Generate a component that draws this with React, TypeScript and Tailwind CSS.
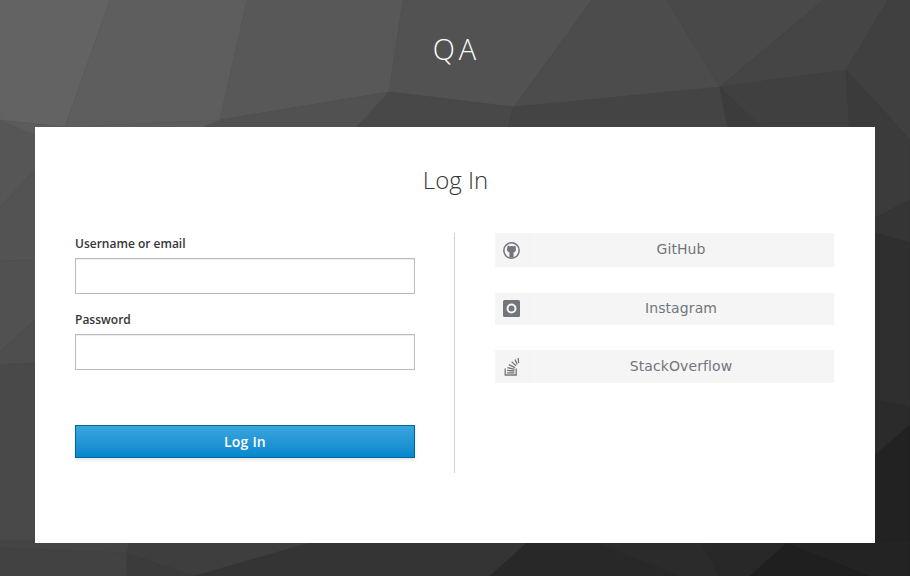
const polys: [string, string][] = [
  ["0,0 110,0 65,127 0,120", "#636363"],
  ["110,0 247,0 220,120 65,127", "#5e5e5e"],
  ["247,0 403,0 389,92 220,120", "#585858"],
  ["403,0 592,0 514,107 389,92", "#525252"],
  ["592,0 667,0 720,87 514,107", "#4c4c4c"],
  ["667,0 824,0 720,87", "#494949"],
  ["824,0 888,0 846,70 720,87", "#454545"],
  ["888,0 910,0 910,140 846,70", "#404040"],
  ["0,120 65,127 220,120 175,140 0,140", "#5c5c5c"],
  ["220,120 389,92 345,140 175,140", "#515151"],
  ["389,92 514,107 505,140 345,140", "#484848"],
  ["514,107 720,87 730,140 505,140", "#444444"],
  ["720,87 846,70 850,140 730,140", "#404040"],
  ["720,87 730,140 775,140", "#3c3c3c"],
  ["846,70 910,140 910,200 875,218 850,140", "#3b3b3b"],
  ["875,218 910,200 910,243 875,233", "#353535"],
  ["875,233 910,243 910,407 875,400", "#2f2f2f"],
  ["875,400 910,407 910,425 875,455", "#2b2b2b"],
  ["875,455 910,425 910,576 875,576", "#222222"],
  ["0,120 35,135 35,170 0,207", "#565656"],
  ["0,207 35,170 35,260 0,261", "#535353"],
  ["0,261 35,260 35,320 0,352", "#515151"],
  ["0,352 35,320 35,363 0,365", "#4e4e4e"],
  ["0,365 35,363 35,548 0,548", "#494949"],
  ["0,540 130,540 127,553 0,548", "#444444"],
  ["0,548 127,553 127,576 0,576", "#424242"],
  ["127,553 195,576 127,576", "#3b3b3b"],
  ["130,540 320,540 195,576 127,553", "#3e3e3e"],
  ["320,540 530,540 490,576 195,576", "#343434"],
  ["530,540 590,540 680,576 490,576", "#282828"],
  ["590,540 700,540 720,576 680,576", "#2b2b2b"],
  ["700,540 787,543 750,576 720,576", "#282828"],
  ["787,543 870,576 750,576", "#1f1f1f"],
  ["787,543 910,540 910,576 870,576", "#232323"],
];

function GithubIcon() {
  return (
    <svg width="17" height="17" viewBox="0 0 17 17" aria-hidden="true">
      <circle cx="8.5" cy="8.5" r="7.7" fill="none" stroke="#72767b" strokeWidth="1.5" />
      <path
        d="M4.6 3.4 L6.2 4.3 Q8.5 3.8 10.8 4.3 L12.4 3.4 L12.7 5.6 Q13.6 8.9 11.6 10 Q10.9 10.5 10.3 10.6 L10.6 11.4 V15.6 H6.4 V11.4 L6.7 10.6 Q6.1 10.5 5.4 10 Q3.4 8.9 4.3 5.6 Z"
        fill="#72767b"
      />
    </svg>
  );
}

function InstagramIcon() {
  return (
    <svg className="-translate-y-px" width="17" height="17" viewBox="0 0 17 17" aria-hidden="true">
      <rect width="17" height="17" rx="1.5" fill="#72767b" />
      <circle cx="8.5" cy="8.5" r="4" fill="none" stroke="#f5f5f5" strokeWidth="2" />
    </svg>
  );
}

function StackIcon() {
  return (
    <svg width="17" height="19" viewBox="0 0 17 19" aria-hidden="true">
      <g fill="none" stroke="#72767b" strokeWidth="1.3">
        <path d="M2.2 11.5 V18 H13.2 V11.5" />
        <path d="M4 15.9 H11.4" />
        <path d="M4 13.4 L11.4 14" />
        <path d="M4.4 10.6 L11.6 12.3" />
        <path d="M5.8 7.6 L12 10.6" />
        <path d="M8.6 4.6 L12.9 8.8" />
        <path d="M12 2.4 L14.2 7.6" />
        <path d="M15.2 1 L15.6 6" />
      </g>
    </svg>
  );
}

function Social({
  name,
  icon,
  className,
  textClass,
}: {
  name: string;
  icon: React.ReactNode;
  className: string;
  textClass: string;
}) {
  return (
    <a className={`flex items-stretch bg-[#f5f5f5] text-[#72767b] ${className}`}>
      <span className="flex w-[35px] shrink-0 items-center pl-2 border-r border-[#f2f2f2]">{icon}</span>
      <span
        className={`flex-1 self-center pr-[2px] text-center text-[14px] tracking-[0.1px] [font-family:'DejaVu_Sans',sans-serif] ${textClass}`}
      >
        {name}
      </span>
    </a>
  );
}

export default function App() {
  return (
    <div className="relative flex h-screen flex-col overflow-hidden bg-[#3a3a3a] [font-family:'Open_Sans',sans-serif]">
      <svg className="absolute inset-0" width="910" height="576" viewBox="0 0 910 576" aria-hidden="true">
        {polys.map(([p, c], i) => (
          <polygon key={i} points={p} fill={c} stroke={c} strokeWidth="0.5" />
        ))}
      </svg>
      <div className="relative flex h-[127px] shrink-0 justify-center pt-[28px]">
        <h1 className="pl-[3px] text-[29px] font-light leading-[42px] tracking-[4px] text-[#fafafa]">QA</h1>
      </div>
      <main className="relative mx-[35px] h-[416px] bg-white px-10 pt-[35px]">
        <h2 className="pl-[1px] text-center text-[24px] font-light leading-[36px] text-[#363636]">Log In</h2>
        <div className="mt-[35px] flex">
          <form className="w-[340px]">
            <label className="block pt-[2px] text-[12px] font-[550] leading-[17px] text-[#363636]">Username or email</label>
            <input className="mt-[6px] block h-[36px] w-full border border-[#bbbbbb] bg-white shadow-[inset_0_1px_1px_rgba(3,3,3,0.08)]" />
            <label className="mt-[17px] block text-[12px] font-[550] leading-[17px] text-[#363636]">Password</label>
            <input className="mt-[6px] block h-[36px] w-full border border-[#bbbbbb] bg-white shadow-[inset_0_1px_1px_rgba(3,3,3,0.08)]" />
            <button
              type="button"
              className="mt-[55px] block h-[33px] w-full border border-[#00659c] bg-gradient-to-b from-[#39a5dc] to-[#0088ce] text-[14px] font-semibold tracking-[0.2px] text-white shadow-[0_2px_3px_rgba(3,3,3,0.1)]"
            >
              Log In
            </button>
          </form>
          <div className="ml-[39px] h-[240px] w-px bg-[#d1d1d1]" />
          <div className="ml-10 flex w-[339px] flex-col">
            <Social name="GitHub" className="h-[34px]" textClass="-translate-y-px" icon={<GithubIcon />} />
            <Social name="Instagram" className="mt-[26px] h-[32px]" textClass="-translate-y-px" icon={<InstagramIcon />} />
            <Social name="StackOverflow" className="mt-[25px] h-[33px]" textClass="" icon={<StackIcon />} />
          </div>
        </div>
      </main>
    </div>
  );
}
